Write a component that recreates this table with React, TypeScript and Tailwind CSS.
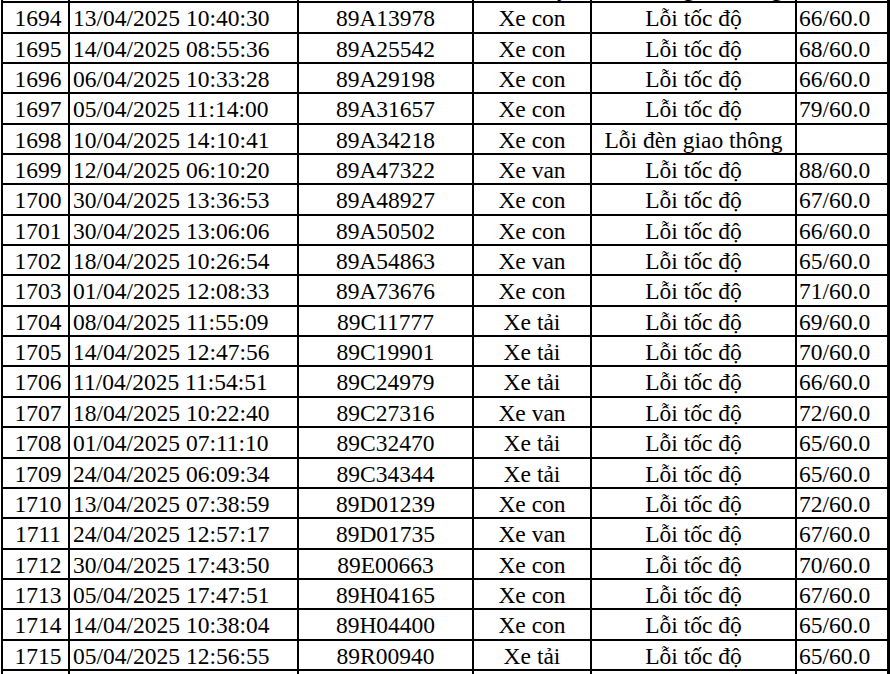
type Row = [string, string, string, string, string, string];

const rows: Row[] = [
  ["1693", "09/04/2025 16:21:07", "89A12084", "Xe máy", "Lỗi đèn giao thông", ""],
  ["1694", "13/04/2025 10:40:30", "89A13978", "Xe con", "Lỗi tốc độ", "66/60.0"],
  ["1695", "14/04/2025 08:55:36", "89A25542", "Xe con", "Lỗi tốc độ", "68/60.0"],
  ["1696", "06/04/2025 10:33:28", "89A29198", "Xe con", "Lỗi tốc độ", "66/60.0"],
  ["1697", "05/04/2025 11:14:00", "89A31657", "Xe con", "Lỗi tốc độ", "79/60.0"],
  ["1698", "10/04/2025 14:10:41", "89A34218", "Xe con", "Lỗi đèn giao thông", ""],
  ["1699", "12/04/2025 06:10:20", "89A47322", "Xe van", "Lỗi tốc độ", "88/60.0"],
  ["1700", "30/04/2025 13:36:53", "89A48927", "Xe con", "Lỗi tốc độ", "67/60.0"],
  ["1701", "30/04/2025 13:06:06", "89A50502", "Xe con", "Lỗi tốc độ", "66/60.0"],
  ["1702", "18/04/2025 10:26:54", "89A54863", "Xe van", "Lỗi tốc độ", "65/60.0"],
  ["1703", "01/04/2025 12:08:33", "89A73676", "Xe con", "Lỗi tốc độ", "71/60.0"],
  ["1704", "08/04/2025 11:55:09", "89C11777", "Xe tải", "Lỗi tốc độ", "69/60.0"],
  ["1705", "14/04/2025 12:47:56", "89C19901", "Xe tải", "Lỗi tốc độ", "70/60.0"],
  ["1706", "11/04/2025 11:54:51", "89C24979", "Xe tải", "Lỗi tốc độ", "66/60.0"],
  ["1707", "18/04/2025 10:22:40", "89C27316", "Xe van", "Lỗi tốc độ", "72/60.0"],
  ["1708", "01/04/2025 07:11:10", "89C32470", "Xe tải", "Lỗi tốc độ", "65/60.0"],
  ["1709", "24/04/2025 06:09:34", "89C34344", "Xe tải", "Lỗi tốc độ", "65/60.0"],
  ["1710", "13/04/2025 07:38:59", "89D01239", "Xe con", "Lỗi tốc độ", "72/60.0"],
  ["1711", "24/04/2025 12:57:17", "89D01735", "Xe van", "Lỗi tốc độ", "67/60.0"],
  ["1712", "30/04/2025 17:43:50", "89E00663", "Xe con", "Lỗi tốc độ", "70/60.0"],
  ["1713", "05/04/2025 17:47:51", "89H04165", "Xe con", "Lỗi tốc độ", "67/60.0"],
  ["1714", "14/04/2025 10:38:04", "89H04400", "Xe con", "Lỗi tốc độ", "65/60.0"],
  ["1715", "05/04/2025 12:56:55", "89R00940", "Xe tải", "Lỗi tốc độ", "65/60.0"],
  ["1716", "21/04/2025 09:14:26", "89R01152", "Xe tải", "Lỗi tốc độ", "68/60.0"],
];

const cell = "bg-white leading-[31px] whitespace-nowrap overflow-visible";

export default function App() {
  return (
    <div
      className="h-[674px] w-[890px] overflow-hidden bg-white text-black text-[23.5px]"
      style={{ fontFamily: '"Liberation Serif", "Times New Roman", serif' }}
    >
      <div className="-mt-[29px] ml-px w-[889px] grid grid-cols-[65px_227px_173px_116px_203px_90px] auto-rows-[28.35px] gap-[2px] bg-black p-[2px]">
        {rows.map((r) => (
          <div key={r[0]} className="contents">
            <div className={`${cell} text-center pl-[5px]`}>{r[0]}</div>
            <div className={`${cell} pl-[3px]`}>{r[1]}</div>
            <div className={`${cell} text-center`}>{r[2]}</div>
            <div className={`${cell} text-center`}>{r[3]}</div>
            <div className={`${cell} text-center`}>{r[4]}</div>
            <div className={`${cell} pl-[2px]`}>{r[5]}</div>
          </div>
        ))}
      </div>
    </div>
  );
}
